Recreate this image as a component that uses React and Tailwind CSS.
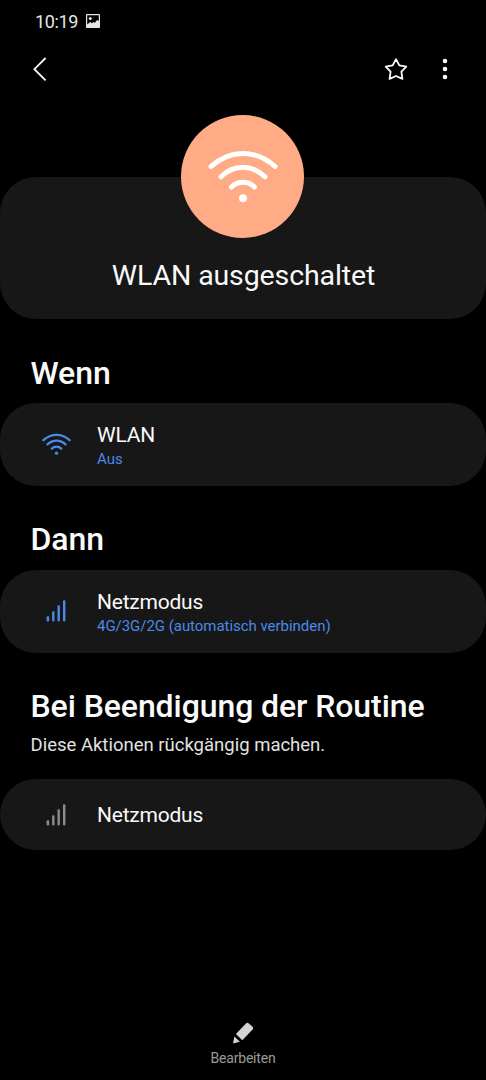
function WifiIcon({ className, stroke = 5 }) {
  return (
    <svg viewBox="0 0 70 56" className={className} fill="none" stroke="currentColor" strokeLinecap="round" strokeWidth={stroke}>
      <path d="M3 17.5C22 0 48 0 67 17.5" />
      <path d="M13 27.8C26 15.2 44 15.2 57 27.8" />
      <path d="M23.5 38C30 31.7 40 31.7 46.5 38" />
      <circle cx="35" cy="49.2" r="4" fill="currentColor" stroke="none" />
    </svg>
  );
}

function SignalIcon({ className }) {
  return (
    <svg viewBox="0 0 20 22" className={className} fill="currentColor">
      <rect x="0.6" y="16.2" width="2.6" height="5.2" rx="0.8" />
      <rect x="6.1" y="11.2" width="2.4" height="10.2" rx="0.8" />
      <rect x="11.5" y="5.3" width="2.4" height="16.1" rx="0.8" />
      <rect x="17" y="0.3" width="2.4" height="21.1" rx="0.8" />
    </svg>
  );
}

function Heading({ children }) {
  return <h2 className="text-[32px] leading-[38px] font-medium tracking-[-0.08px] whitespace-nowrap">{children}</h2>;
}

function Card({ icon, title, detail, className }) {
  return (
    <div className={`flex items-center rounded-[36px] bg-[#171717] ${className}`}>
      <div className="flex w-[97px] shrink-0 pl-[42px]">
        <div className="flex w-7 justify-center">{icon}</div>
      </div>
      <div className={detail ? "pt-[4px] whitespace-nowrap" : "pt-[2px] whitespace-nowrap"}>
        <div className="text-[21px] leading-[25px] tracking-[-0.22px]">{title}</div>
        {detail && <div className="text-[15px] leading-[22px] tracking-[-0.04px] text-[#4a8ae8]">{detail}</div>}
      </div>
    </div>
  );
}

export default function App() {
  return (
    <div className="flex h-[1080px] w-[486px] flex-col overflow-hidden bg-black font-['Roboto',sans-serif] text-[#fafafa]">
      <div className="flex h-[42px] items-center gap-[8px] pl-[35px] text-[18px] text-[#e6e6e6]">
        <span className="w-[43px] pt-px leading-[22px] tracking-[-0.35px]">10:19</span>
        <svg viewBox="0 0 14 14" className="size-[14px]">
          <rect width="14" height="14" rx="1" fill="#e6e6e6" />
          <path d="M1.2 1.2H12.8V7L11.2 6L8.6 9L7.6 8L5.8 9.2L4.2 8L1.2 10.5Z" fill="#000" />
          <circle cx="4.3" cy="4.6" r="1.5" fill="#e6e6e6" />
        </svg>
      </div>

      <header className="flex h-[54px] items-center pr-[37px] pl-[33px]">
        <svg viewBox="0 0 14 24" className="h-6 w-[14px]" fill="none" stroke="currentColor" strokeWidth="1.8">
          <path d="M12.6 1L1.4 12.2L12.6 23.4" />
        </svg>
        <svg viewBox="0 0 24 24" className="mr-[33px] ml-auto size-6" fill="none" stroke="currentColor" strokeWidth="1.8" strokeLinejoin="round">
          <path d="M12 2.2L15.3 8.4L22.3 9.6L17.4 14.7L18.4 21.9L12 19L5.6 21.9L6.6 14.7L1.7 9.6L8.7 8.4Z" />
        </svg>
        <svg viewBox="0 0 8 22" className="h-[22px] w-2" fill="currentColor">
          <circle cx="4" cy="3" r="2.3" />
          <circle cx="4" cy="11" r="2.3" />
          <circle cx="4" cy="19" r="2.3" />
        </svg>
      </header>

      <section className="flex flex-col items-center pt-[19px]">
        <div className="z-10 mr-px -mb-[61px] flex size-[123px] items-center justify-center rounded-full bg-[#ffab85]">
          <WifiIcon className="h-[56px] w-[70px] text-white" />
        </div>
        <div className="flex h-[142px] w-full justify-center rounded-[36px] bg-[#171717] pt-[82px]">
          <h1 className="pl-px text-[28.5px] leading-[34px] tracking-[-0.12px] whitespace-nowrap">WLAN ausgeschaltet</h1>
        </div>
      </section>

      <section className="pt-[35px]">
        <div className="h-[49px] pl-[30.5px]"><Heading>Wenn</Heading></div>
        <Card className="h-[83px]" icon={<WifiIcon stroke={5.6} className="h-[23px] w-[29px] shrink-0 text-[#4a8ae8]" />} title="WLAN" detail="Aus" />
      </section>

      <section className="pt-[34px]">
        <div className="h-[50px] pl-[30.5px]"><Heading>Dann</Heading></div>
        <Card className="h-[83px]" icon={<SignalIcon className="mb-px h-[22px] w-5 text-[#4a8ae8]" />} title="Netzmodus" detail="4G/3G/2G (automatisch verbinden)" />
      </section>

      <section className="pt-[34px]">
        <div className="h-[92px] pl-[30.5px]">
          <Heading>Bei Beendigung der Routine</Heading>
          <p className="pt-[9px] text-[18.5px] leading-[22px] text-[#e2e2e2]">Diese Aktionen rückgängig machen.</p>
        </div>
        <Card className="h-[71px]" icon={<SignalIcon className="h-[22px] w-5 text-[#8c8c8c]" />} title="Netzmodus" />
      </section>

      <button className="mt-auto mb-[14px] flex flex-col items-center gap-[6px] text-[#9a9a9a]">
        <svg viewBox="0 0 22 22" className="size-[22px]" fill="#d4d4d4">
          <path d="M14 1.4Q15.4 0.2 16.8 1.4L20.6 4.8Q21.8 6 20.6 7.4L10.3 18.2L3.9 11.9Z" />
          <path d="M2.4 14.4L7.8 19.8L1 21.4Z" />
        </svg>
        <span className="text-[14px] leading-4 tracking-[-0.2px]">Bearbeiten</span>
      </button>
    </div>
  );
}
